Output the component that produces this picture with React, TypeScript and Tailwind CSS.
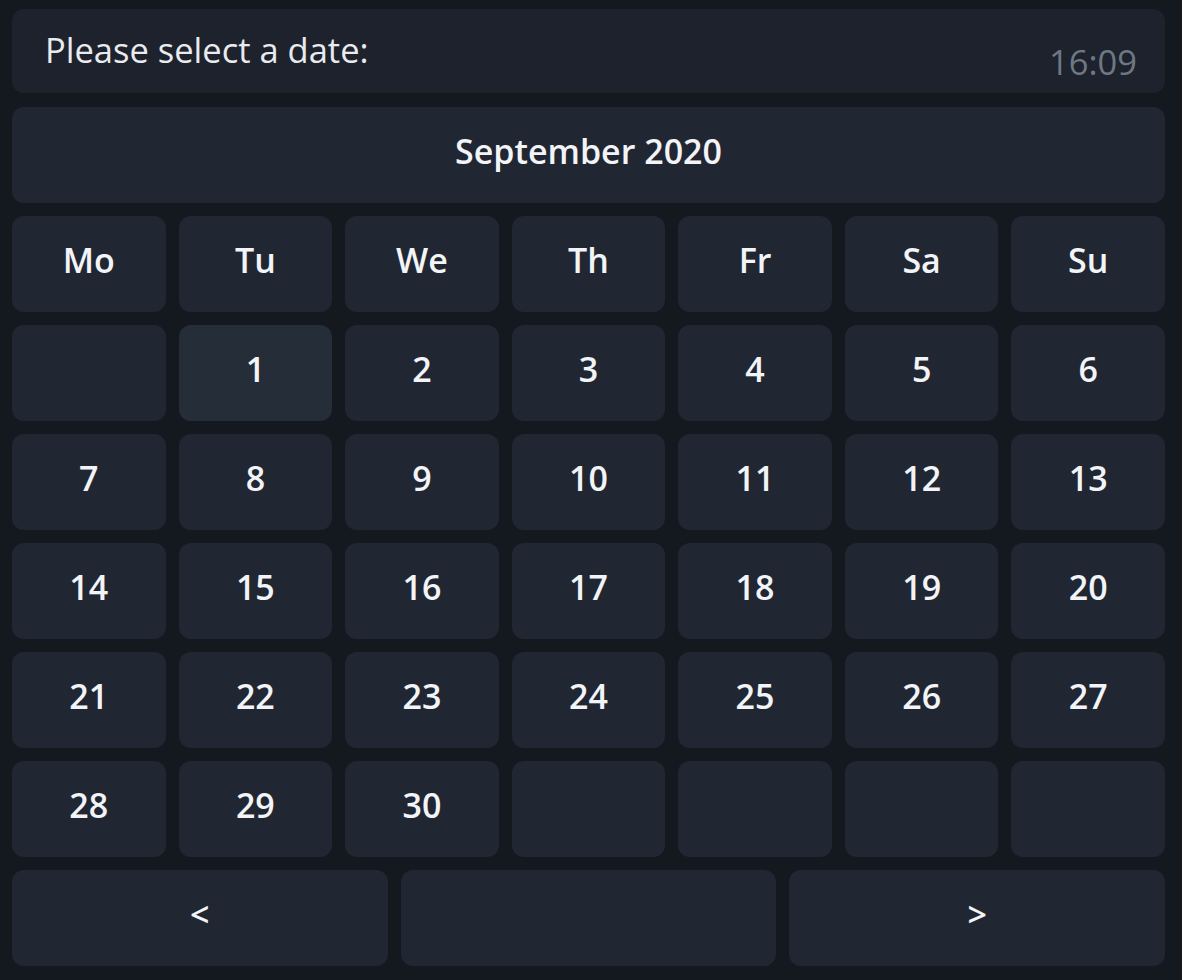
const days = ['Mo', 'Tu', 'We', 'Th', 'Fr', 'Sa', 'Su']

// September 2020 starts on a Tuesday
const cells: (number | null)[] = [
  null,
  ...Array.from({ length: 30 }, (_, i) => i + 1),
  null, null, null, null,
]

function Key({ children, active }: { children?: React.ReactNode; active?: boolean }) {
  return (
    <div
      className={`h-[96px] rounded-[12px] flex items-center justify-center pb-[8px] text-[34px] font-semibold text-[#f2f4f7] ${
        active ? 'bg-[#252d39]' : 'bg-[#212732]'
      }`}
    >
      {children}
    </div>
  )
}

export default function App() {
  return (
    <div
      className="min-h-screen h-[980px] bg-[#141920] pt-[9px] px-[12px] flex flex-col gap-[13px]"
      style={{ fontFamily: '"Open Sans", "Noto Sans", sans-serif' }}
    >
      <div className="w-[1153px] h-[84px] rounded-[12px] bg-[#1e222c] flex items-start justify-between pl-[33px] pr-[28px]">
        <span className="pt-[15px] text-[34.5px] text-[#e8ebef]">Please select a date:</span>
        <span className="pt-[27px] text-[34.5px] text-[#6d7885]">16:09</span>
      </div>

      <div className="w-[1153px] flex flex-col gap-[13px] mt-[1px]">
        <Key>September 2020</Key>

        <div className="grid grid-cols-7 gap-[13px]">
          {days.map((d) => (
            <Key key={d}>{d}</Key>
          ))}
          {cells.map((n, i) => (
            <Key key={i} active={n === 1}>
              {n ?? ''}
            </Key>
          ))}
        </div>

        <div className="grid grid-cols-3 gap-[13px]">
          <Key>&lt;</Key>
          <Key />
          <Key>&gt;</Key>
        </div>
      </div>
    </div>
  )
}
